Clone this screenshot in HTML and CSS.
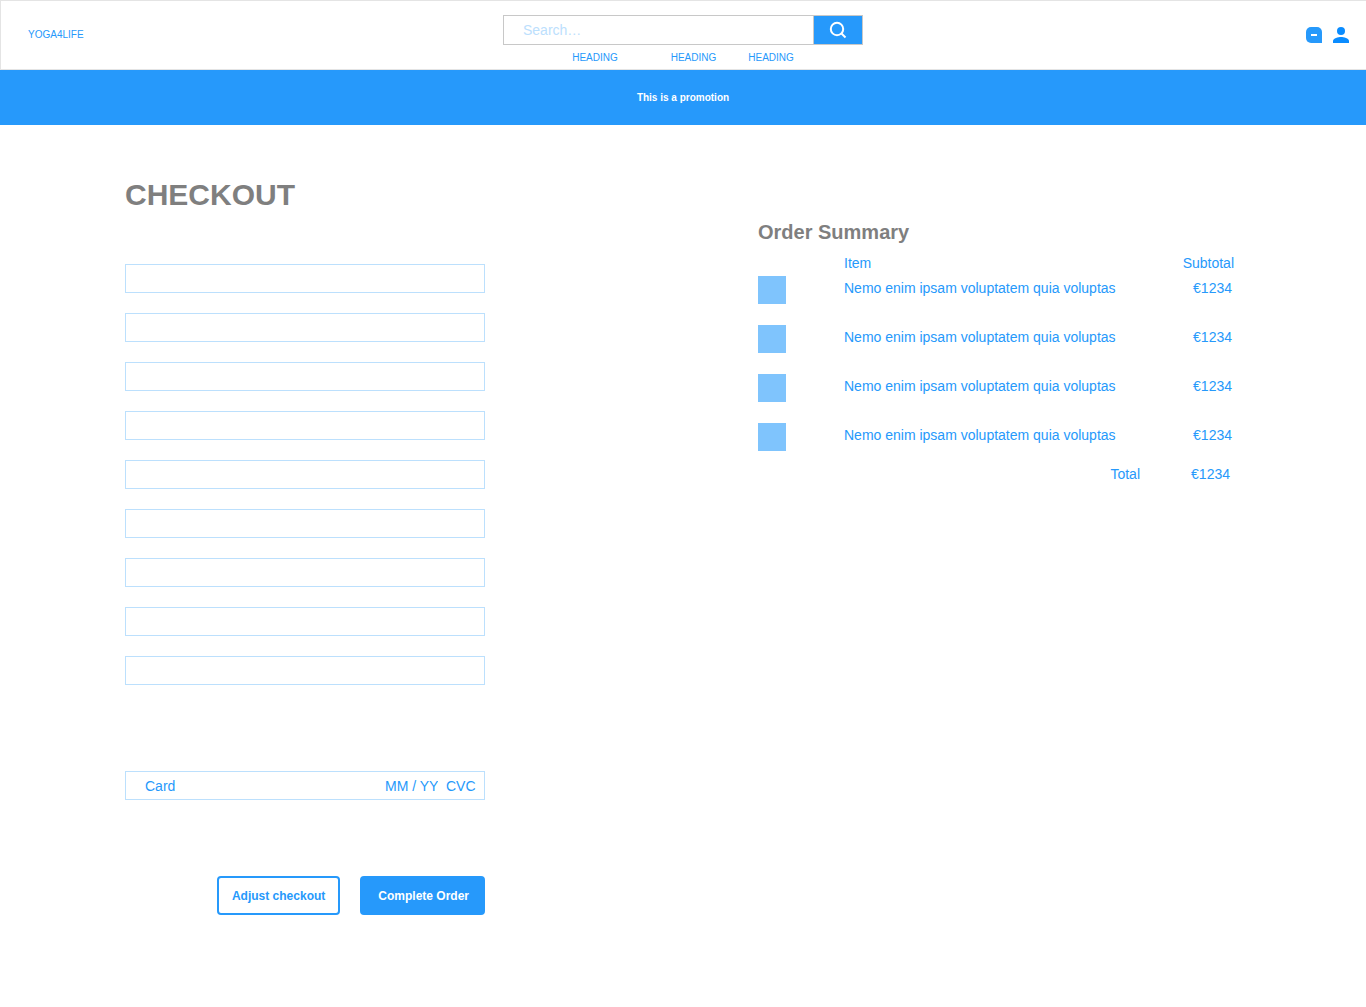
FILE: index.html
```html
<!DOCTYPE html>
<html lang="en">
<head>
  <meta charset="utf-8">
  <meta name="viewport" content="width=device-width, initial-scale=1">
  <title>Checkout – YOGA4LIFE</title>
  <link rel="stylesheet" href="styles.css">
</head>
<body>
  <header class="site-header">
    <a class="brand" href="#">YOGA4LIFE</a>
    <div class="header-center">
      <form class="search" role="search">
        <input class="search-input" type="search" placeholder="Search…" aria-label="Search">
        <button class="search-button" type="submit" aria-label="Search">
          <svg width="18" height="18" viewBox="0 0 18 18" fill="none" stroke="currentColor" stroke-width="2" aria-hidden="true">
            <circle cx="8" cy="8" r="6.200"/>
            <path d="M12 12L16.500 16.500"/>
          </svg>
        </button>
      </form>
      <nav class="main-nav" aria-label="Main">
        <a class="nav-first" href="#">HEADING</a>
        <a href="#">HEADING</a>
        <a href="#">HEADING</a>
      </nav>
    </div>
    <div class="header-actions">
      <a href="#" aria-label="Basket">
        <svg width="16" height="16" viewBox="0 0 16 16" aria-hidden="true">
          <path fill="#2699fb" d="M5 0h6a5 5 0 0 1 5 5v11H5a5 5 0 0 1-5-5V5a5 5 0 0 1 5-5z"/>
          <path fill="#fff" d="M5 7h6v2H5z"/>
        </svg>
      </a>
      <a href="#" aria-label="Account">
        <svg width="16" height="16" viewBox="0 0 16 16" fill="#0a8cff" aria-hidden="true">
          <circle cx="8" cy="4" r="4"/>
          <path d="M0 16v-2c0-2.700 5.300-4 8-4s8 1.300 8 4v2z"/>
        </svg>
      </a>
    </div>
  </header>

  <p class="promotion">This is a promotion</p>

  <main class="checkout">
    <section class="details">
      <h1>CHECKOUT</h1>
      <form class="checkout-form">
        <div class="fields">
          <input class="field" type="email" aria-label="Email">
          <input class="field" type="text" aria-label="First name">
          <input class="field" type="text" aria-label="Last name">
          <input class="field" type="text" aria-label="Address line 1">
          <input class="field" type="text" aria-label="Address line 2">
          <input class="field" type="text" aria-label="City">
          <input class="field" type="text" aria-label="Postcode">
          <input class="field" type="text" aria-label="Country">
          <input class="field" type="tel" aria-label="Phone">
        </div>
        <div class="card-field">
          <input class="card-number" type="text" placeholder="Card" aria-label="Card number">
          <input class="card-expiry" type="text" placeholder="MM / YY" aria-label="Expiry date">
          <input class="card-cvc" type="text" placeholder="CVC" aria-label="Security code">
        </div>
        <div class="form-actions">
          <button class="button button-outline" type="button">Adjust checkout</button>
          <button class="button button-solid" type="submit">Complete Order</button>
        </div>
      </form>
    </section>

    <section class="summary">
      <h2>Order Summary</h2>
      <table class="order">
        <thead>
          <tr><td class="thumb-col"></td><th scope="col">Item</th><th class="subtotal" scope="col">Subtotal</th></tr>
        </thead>
        <tbody>
          <tr><td><div class="thumb"></div></td><td>Nemo enim ipsam voluptatem quia voluptas</td><td class="price">€1234</td></tr>
          <tr><td><div class="thumb"></div></td><td>Nemo enim ipsam voluptatem quia voluptas</td><td class="price">€1234</td></tr>
          <tr><td><div class="thumb"></div></td><td>Nemo enim ipsam voluptatem quia voluptas</td><td class="price">€1234</td></tr>
          <tr><td><div class="thumb"></div></td><td>Nemo enim ipsam voluptatem quia voluptas</td><td class="price">€1234</td></tr>
        </tbody>
        <tfoot>
          <tr><th class="total" colspan="2" scope="row">Total</th><td class="total-price">€1234</td></tr>
        </tfoot>
      </table>
    </section>
  </main>
</body>
</html>
```
FILE: styles.css
```css
:root {
  --blue: #2699fb;
  --blue-mid: #7fc4fd;
  --blue-light: #bce0fd;
  --grey: #7f7f7f;
}

* {
  box-sizing: border-box;
}

body {
  margin: 0;
  background: #fff;
  color: var(--blue);
  font-family: "Liberation Sans", Arial, sans-serif;
  font-size: 14px;
  line-height: 24px;
}

a {
  color: inherit;
  text-decoration: none;
}

input,
button {
  margin: 0;
  padding: 0;
  border: 0;
  border-radius: 0;
  background: none;
  color: inherit;
  font: inherit;
}

/* Header */
.site-header {
  display: grid;
  grid-template-columns: 1fr 360px 1fr;
  align-items: center;
  min-height: 70px;
  padding: 0 17px 0 16px;
  border: 1px solid #e4e4e4;
  border-right: 0;
  font-size: 10px;
}

.brand {
  padding-left: 11px;
}

.header-center {
  display: flex;
  flex-direction: column;
  gap: 6px;
  padding-top: 9px;
}

.search {
  display: flex;
  height: 30px;
  border: 1px solid #c8c8c8;
}

.search-input {
  flex: 1;
  min-width: 0;
  padding-left: 19px;
  font-size: 14px;
  appearance: none;
}

.search-input::placeholder {
  color: var(--blue-light);
  opacity: 1;
}

.search-button {
  display: flex;
  align-items: center;
  justify-content: center;
  width: 49px;
  border-left: 1px solid #c8c8c8;
  background: var(--blue);
  color: #fff;
}

.main-nav {
  display: flex;
  justify-content: center;
  gap: 32px;
  line-height: 14px;
}

.nav-first {
  margin-right: 21px;
}

.header-actions {
  display: flex;
  justify-content: flex-end;
  gap: 11px;
}

.header-actions svg {
  display: block;
}

.promotion {
  margin: 0;
  padding: 16px 16px 15px;
  background: var(--blue);
  color: #fff;
  font-size: 10px;
  font-weight: bold;
  text-align: center;
}

/* Checkout */
.checkout {
  display: grid;
  grid-template-columns: 360px 476px;
  justify-content: space-between;
  padding: 50px 132px 92px 125px;
}

h1 {
  margin: 0 0 49px;
  color: var(--grey);
  font-size: 30px;
  line-height: 40px;
}

.fields {
  display: grid;
  gap: 20px;
}

.field,
.card-field {
  width: 100%;
  height: 29px;
  border: 1px solid var(--blue-light);
}

.field {
  padding: 0 19px;
}

.card-field {
  display: flex;
  gap: 8px;
  margin-top: 86px;
  padding: 0 7px 0 19px;
}

.card-field input::placeholder {
  color: var(--blue);
  opacity: 1;
}

.card-number {
  flex: 1;
  min-width: 0;
}

.card-expiry {
  width: 53px;
}

.card-cvc {
  width: 31px;
}

.form-actions {
  display: flex;
  justify-content: flex-end;
  gap: 20px;
  margin-top: 76px;
}

.button {
  height: 39px;
  border: 2px solid var(--blue);
  border-radius: 4px;
  font-size: 12px;
  font-weight: bold;
}

.button-outline {
  padding: 0 13px;
}

.button-solid {
  padding: 0 14px 0 16px;
  background: var(--blue);
  color: #fff;
}

/* Order summary */
.summary {
  padding-top: 45px;
}

h2 {
  margin: 0 0 7px;
  color: var(--grey);
  font-size: 20px;
  line-height: 24px;
}

.order {
  width: 100%;
  border-collapse: collapse;
}

.order th,
.order td {
  padding: 0;
  font-weight: normal;
  text-align: left;
  vertical-align: top;
}

.order thead tr {
  height: 25px;
}

.order tbody tr {
  height: 49px;
}

.order tbody tr:last-child {
  height: 39px;
}

.order .thumb-col {
  width: 86px;
}

.thumb {
  width: 28px;
  height: 28px;
  background: var(--blue-mid);
}

.order .subtotal,
.order .price,
.order .total,
.order .total-price {
  text-align: right;
}

.order .subtotal {
  width: 94px;
}

.order .price {
  padding-right: 2px;
}

.order .total-price {
  padding-right: 4px;
}
```
